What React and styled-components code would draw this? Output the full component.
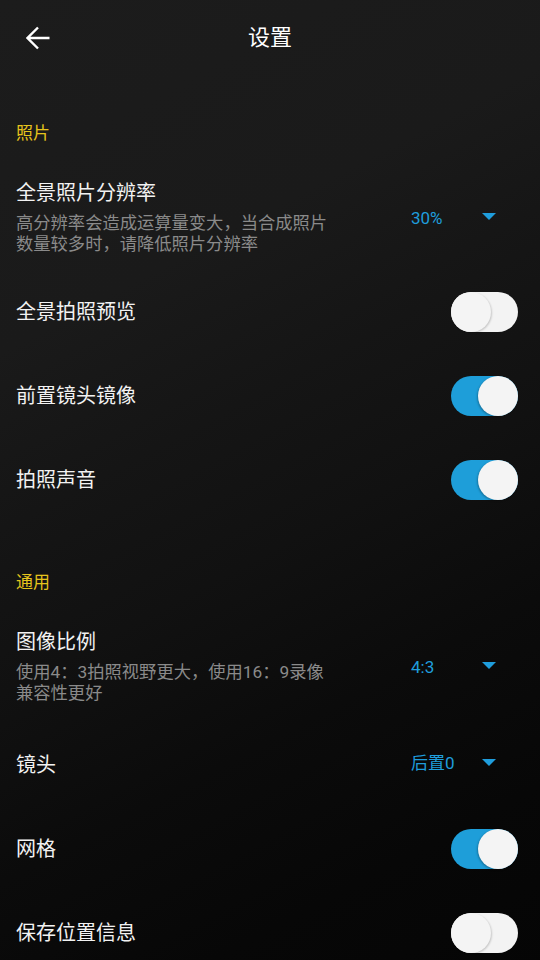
import React from "react";
import styled, { createGlobalStyle } from "styled-components";

const GlobalStyle = createGlobalStyle`
  body {
    margin: 0;
    background: #0a0a0a;
  }
`;

const Page = styled.div`
  width: 540px;
  min-height: 960px;
  overflow: hidden;
  font-family: Roboto, "Noto Sans CJK SC", sans-serif;
  color: #f2f2f2;
  background: linear-gradient(
    152deg,
    #1c1c1c 0%,
    #1a1a1a 28%,
    #151515 42%,
    #111111 55%,
    #0b0b0b 70%,
    #070707 85%,
    #050505 100%
  );
`;

const Header = styled.div`
  height: 76px;
  display: flex;
  align-items: center;
  justify-content: center;
  position: relative;
`;

const BackButton = styled.div`
  position: absolute;
  left: 26px;
  top: 26px;
  width: 24px;
  height: 24px;
  display: flex;
`;

const Title = styled.div`
  font-size: 22px;
  line-height: 30px;
  color: #ffffff;
`;

const Section = styled.div`
  padding: ${(p) => p.top || 45}px 16px 15px;
  font-size: 17px;
  line-height: 24px;
  color: #e6c41c;
`;

const Row = styled.div`
  display: flex;
  align-items: center;
  justify-content: space-between;
  padding: ${(p) => (p.tall ? "20px 22px 15px 16px" : "0 22px 0 16px")};
  min-height: ${(p) => (p.tall ? "auto" : p.dropdown ? "88px" : "84px")};
  box-sizing: border-box;
`;

const Texts = styled.div`
  display: flex;
  flex-direction: column;
  width: 318px;
`;

const Label = styled.div`
  font-size: 20px;
  line-height: 26px;
  color: #f2f2f2;
  padding-top: ${(p) => (p.drop ? 3 : 0)}px;
`;

const Hint = styled.div`
  margin-top: 7px;
  font-size: 17.3px;
  line-height: 21px;
  color: #8a8a8a;
`;

const Dropdown = styled.div`
  width: 107px;
  padding-right: 22px;
  box-sizing: border-box;
  display: flex;
  align-items: center;
  justify-content: space-between;
  flex-shrink: 0;
`;

const Value = styled.span`
  font-size: 17px;
  line-height: 24px;
  color: #1f9ddc;
`;

const Caret = styled.span`
  width: 0;
  height: 0;
  border-left: 7px solid transparent;
  border-right: 7px solid transparent;
  border-top: 7px solid #1f9ddc;
  margin-top: -2px;
`;

const Track = styled.div`
  width: 67px;
  height: 40px;
  border-radius: 20px;
  background: ${(p) => (p.on ? "#1e9ed9" : "#f3f3f3")};
  display: flex;
  justify-content: ${(p) => (p.on ? "flex-end" : "flex-start")};
  flex-shrink: 0;
`;

const Knob = styled.div`
  width: 40px;
  height: 40px;
  border-radius: 50%;
  background: #f4f4f4;
  box-shadow: ${(p) =>
    p.on ? "-1px 1px 2px rgba(0,0,0,0.25)" : "1px 1px 2px rgba(0,0,0,0.18)"};
`;

const Toggle = ({ on }) => (
  <Track on={on ? 1 : 0}>
    <Knob on={on ? 1 : 0} />
  </Track>
);

const SelectRow = ({ label, hint, value }) => (
  <Row tall={hint ? 1 : 0} dropdown={1}>
    <Texts>
      <Label drop={hint ? 0 : 1}>{label}</Label>
      {hint && <Hint>{hint}</Hint>}
    </Texts>
    <Dropdown>
      <Value>{value}</Value>
      <Caret />
    </Dropdown>
  </Row>
);

const SwitchRow = ({ label, on }) => (
  <Row>
    <Label>{label}</Label>
    <Toggle on={on} />
  </Row>
);

export default function App() {
  return (
    <Page>
      <GlobalStyle />
      <Header>
        <BackButton>
          <svg width="24" height="24" viewBox="0 0 24 24" fill="none">
            <path
              d="M23.5 12H1.5M12 1.5L1.5 12L12 22.5"
              stroke="#ffffff"
              strokeWidth="2.4"
            />
          </svg>
        </BackButton>
        <Title>设置</Title>
      </Header>

      <Section>照片</Section>
      <SelectRow
        label="全景照片分辨率"
        hint="高分辨率会造成运算量变大，当合成照片数量较多时，请降低照片分辨率"
        value="30%"
      />
      <SwitchRow label="全景拍照预览" on={false} />
      <SwitchRow label="前置镜头镜像" on />
      <SwitchRow label="拍照声音" on />

      <Section top={48}>通用</Section>
      <SelectRow
        label="图像比例"
        hint="使用4：3拍照视野更大，使用16：9录像兼容性更好"
        value="4:3"
      />
      <SelectRow label="镜头" value="后置0" />
      <SwitchRow label="网格" on />
      <SwitchRow label="保存位置信息" on={false} />
    </Page>
  );
}
